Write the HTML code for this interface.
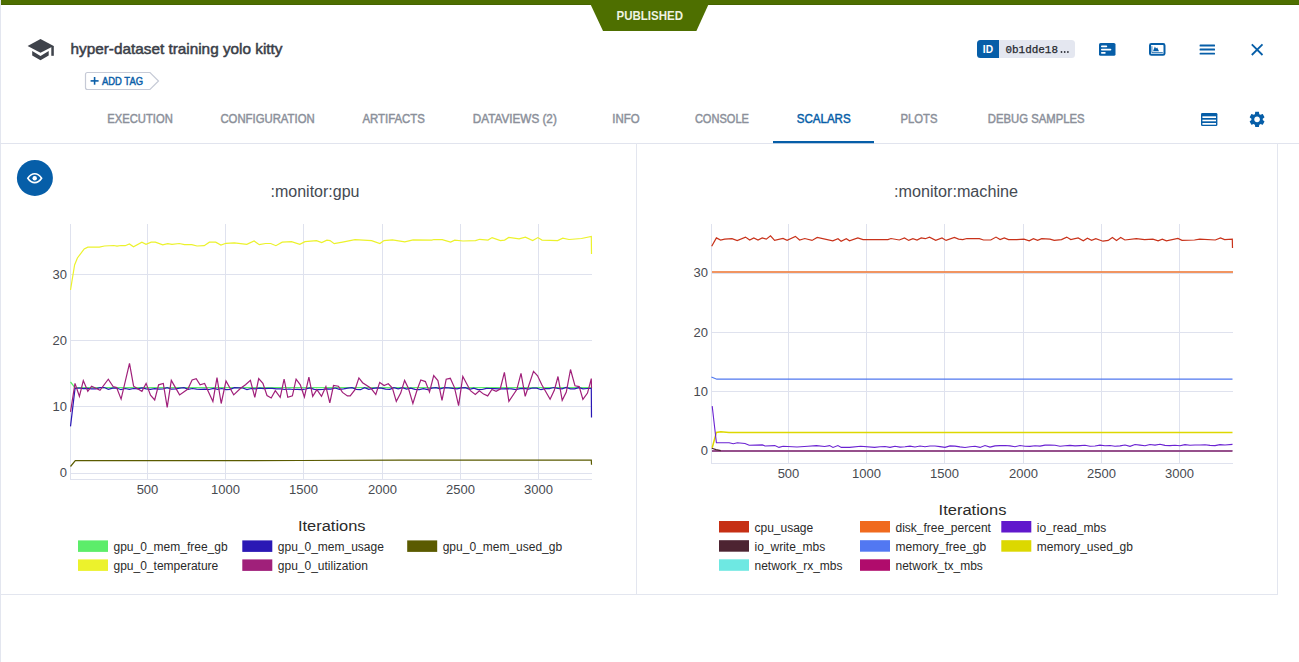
<!DOCTYPE html>
<html><head><meta charset="utf-8">
<style>
html,body{margin:0;padding:0;background:#fff;}
body{width:1299px;height:662px;position:relative;overflow:hidden;font-family:"Liberation Sans",sans-serif;}
svg{position:absolute;left:0;top:0;}
text{font-family:"Liberation Sans",sans-serif;}
.tab{font-size:12px;fill:#8b909a;stroke:#8b909a;stroke-width:0.45px;}
.tk{font-size:13px;fill:#474a50;}
.lg{font-size:12px;fill:#2a2a2a;}
.ttl{font-size:16px;fill:#454a52;}
.it{font-size:14px;fill:#2a2a2a;}
</style></head>
<body>
<svg width="1299" height="662" viewBox="0 0 1299 662">
<!-- page borders -->
<rect x="0" y="0" width="1" height="662" fill="#e3e6ef"/>
<rect x="0" y="143" width="1299" height="1" fill="#e1e4ee"/>
<rect x="636" y="143" width="1" height="452" fill="#e3e6ef"/>
<rect x="1277" y="143" width="1" height="452" fill="#e3e6ef"/>
<rect x="0" y="594" width="1278" height="1" fill="#e3e6ef"/>
<!-- top status bar -->
<rect x="1" y="0" width="1298" height="5" fill="#4e6f00"/><rect x="1" y="4" width="1298" height="1" fill="#466400"/>
<polygon points="588.5,0 710.5,0 696.4,31 603,31" fill="#4e6f00"/>
<text x="616.5" y="20" font-size="12.5" font-weight="bold" fill="#eef3e2" textLength="66.5" lengthAdjust="spacingAndGlyphs">PUBLISHED</text>
<!-- grad cap icon -->
<polygon points="27.6,46 40.5,39 53.7,46 40.5,52.8" fill="#3f434b"/>
<rect x="51.3" y="46" width="2.5" height="9.8" fill="#3f434b"/>
<polygon points="32.2,51 40.5,56 48.7,51 48.7,55.5 40.5,60.3 32.2,55.5" fill="#3f434b"/>
<!-- title -->
<text x="70.5" y="53.8" font-size="15" fill="#3a3e48" stroke="#3a3e48" stroke-width="0.5" textLength="212" lengthAdjust="spacingAndGlyphs">hyper-dataset training yolo kitty</text>
<!-- add tag -->
<path d="M87.5,72.5 H150 L158.5,81 L150,89.5 H87.5 Q85.5,89.5 85.5,87.5 V74.5 Q85.5,72.5 87.5,72.5 Z" fill="#fff" stroke="#c6cad6" stroke-width="1.2"/>
<rect x="90.6" y="80.1" width="8" height="1.6" fill="#0b5fa9"/>
<rect x="93.8" y="77" width="1.6" height="7.7" fill="#0b5fa9"/>
<text x="102" y="84.6" font-size="10.5" fill="#0b5fa9" stroke="#0b5fa9" stroke-width="0.45" textLength="41" lengthAdjust="spacingAndGlyphs">ADD TAG</text>
<!-- ID badge -->
<rect x="977" y="40" width="98" height="18" rx="3.5" fill="#e4e7f0"/>
<path d="M980.5,40 H999 V58 H980.5 Q977,58 977,54.5 V43.5 Q977,40 980.5,40 Z" fill="#065ea8"/>
<text x="982.8" y="53" font-size="11" font-weight="bold" fill="#fff" textLength="10.2" lengthAdjust="spacingAndGlyphs">ID</text>
<text x="1005.5" y="53" font-family="Liberation Mono" font-size="11" fill="#25272d" stroke="#25272d" stroke-width="0.25" textLength="52.5" lengthAdjust="spacingAndGlyphs" style="font-family:'Liberation Mono',monospace">0b1dde18</text>
<circle cx="1061.5" cy="52" r="0.9" fill="#2f3138"/><circle cx="1064.7" cy="52" r="0.9" fill="#2f3138"/><circle cx="1067.9" cy="52" r="0.9" fill="#2f3138"/>
<!-- details icon -->
<rect x="1099" y="43" width="16.5" height="12.8" rx="1.6" fill="#065ea8"/>
<rect x="1101" y="45.5" width="6.2" height="1.7" rx="0.8" fill="#fff"/>
<rect x="1101" y="48.8" width="10.3" height="1.8" rx="0.8" fill="#fff"/>
<rect x="1101" y="52" width="4.7" height="1.8" rx="0.8" fill="#fff"/>
<!-- chart icon -->
<rect x="1150" y="44" width="14.5" height="10.8" rx="1.4" fill="none" stroke="#065ea8" stroke-width="2"/>
<path d="M1151.9,46.2 V52.6 H1162.8" fill="none" stroke="#065ea8" stroke-width="0.8"/>
<path d="M1153,51.2 L1154.9,46.5 L1156,48.5 L1157.2,47.5 L1159,51.2 Z" fill="#065ea8"/>
<!-- hamburger -->
<rect x="1199.6" y="44.6" width="15.4" height="1.8" rx="0.5" fill="#065ea8"/>
<rect x="1199.6" y="48.6" width="15.4" height="1.8" rx="0.5" fill="#065ea8"/>
<rect x="1199.6" y="52.7" width="15.4" height="1.8" rx="0.5" fill="#065ea8"/>
<!-- close -->
<path d="M1251.8,44.3 L1262.5,55 M1262.5,44.3 L1251.8,55" stroke="#065ea8" stroke-width="1.8"/>
<!-- tabs -->
<text class="tab" x="107.3" y="123" textLength="65.5" lengthAdjust="spacingAndGlyphs">EXECUTION</text>
<text class="tab" x="220.4" y="123" textLength="94.3" lengthAdjust="spacingAndGlyphs">CONFIGURATION</text>
<text class="tab" x="362.4" y="123" textLength="62.5" lengthAdjust="spacingAndGlyphs">ARTIFACTS</text>
<text class="tab" x="472.8" y="123" textLength="84" lengthAdjust="spacingAndGlyphs">DATAVIEWS (2)</text>
<text class="tab" x="612.3" y="123" textLength="27.3" lengthAdjust="spacingAndGlyphs">INFO</text>
<text class="tab" x="694.9" y="123" textLength="54" lengthAdjust="spacingAndGlyphs">CONSOLE</text>
<text class="tab" x="796.7" y="123" textLength="54" lengthAdjust="spacingAndGlyphs" style="fill:#065ea8;stroke:#065ea8">SCALARS</text>
<text class="tab" x="900.5" y="123" textLength="37" lengthAdjust="spacingAndGlyphs">PLOTS</text>
<text class="tab" x="987.8" y="123" textLength="96.8" lengthAdjust="spacingAndGlyphs">DEBUG SAMPLES</text>
<rect x="773" y="141" width="101" height="2.2" fill="#065ea8"/>
<!-- list icon -->
<rect x="1201" y="113" width="16.4" height="13" rx="1.3" fill="#065ea8"/>
<rect x="1202.4" y="116.3" width="13.6" height="1.7" fill="#fff"/>
<rect x="1202.4" y="119.7" width="13.6" height="1.6" fill="#fff"/>
<rect x="1202.4" y="123" width="13.6" height="1.7" fill="#fff"/>
<!-- gear -->
<g transform="translate(1247.6,109.9) scale(0.79)">
<path fill="#065ea8" fill-rule="evenodd" d="M19.14,12.94c0.04-0.3,0.06-0.61,0.06-0.94c0-0.32-0.02-0.64-0.07-0.94l2.03-1.58c0.18-0.14,0.23-0.41,0.12-0.61 l-1.92-3.32c-0.12-0.22-0.37-0.29-0.59-0.22l-2.39,0.96c-0.5-0.38-1.03-0.7-1.62-0.94L14.4,2.81c-0.04-0.24-0.24-0.41-0.48-0.41 h-3.84c-0.24,0-0.43,0.17-0.47,0.41L9.25,5.35C8.66,5.59,8.120,5.92,7.63,6.29L5.24,5.33c-0.22-0.08-0.47,0-0.59,0.22L2.74,8.87 C2.62,9.08,2.66,9.34,2.86,9.48l2.03,1.58C4.84,11.36,4.8,11.690,4.8,12s0.02,0.64,0.07,0.94l-2.03,1.58 c-0.18,0.14-0.23,0.41-0.12,0.61l1.92,3.32c0.12,0.22,0.37,0.29,0.59,0.22l2.39-0.96c0.5,0.38,1.03,0.7,1.62,0.94l0.36,2.54 c0.05,0.24,0.24,0.41,0.48,0.41h3.84c0.24,0,0.44-0.17,0.47-0.41l0.36-2.54c0.59-0.24,1.13-0.56,1.62-0.94l2.39,0.96 c0.22,0.08,0.47,0,0.59-0.22l1.92-3.32c0.12-0.22,0.07-0.47-0.12-0.61L19.14,12.94z M12,15.6c-1.98,0-3.6-1.62-3.6-3.6 s1.62-3.6,3.6-3.6s3.6,1.62,3.6,3.6S13.980,15.6,12,15.6z"/>
</g>
<!-- eye button -->
<circle cx="34.9" cy="177.9" r="18" fill="#065ea8"/>
<path d="M27.8,178.2 C30.2,174.6 32.5,173.8 34.7,173.8 C36.9,173.8 39.2,174.6 41.6,178.2 C39.2,181.8 36.9,182.6 34.7,182.6 C32.5,182.6 30.2,181.8 27.8,178.2 Z" fill="none" stroke="#fff" stroke-width="1.6"/>
<circle cx="34.7" cy="178.2" r="2.2" fill="#fff"/>
<!-- chart titles -->
<text class="ttl" x="270.5" y="196.5" textLength="89" lengthAdjust="spacingAndGlyphs">:monitor:gpu</text>
<text class="ttl" x="894" y="196.5" textLength="124" lengthAdjust="spacingAndGlyphs">:monitor:machine</text>
<!-- left chart -->
<rect x="147" y="224" width="1" height="255" fill="#dfe2ee"/>
<rect x="225" y="224" width="1" height="255" fill="#dfe2ee"/>
<rect x="303" y="224" width="1" height="255" fill="#dfe2ee"/>
<rect x="382" y="224" width="1" height="255" fill="#dfe2ee"/>
<rect x="460" y="224" width="1" height="255" fill="#dfe2ee"/>
<rect x="538" y="224" width="1" height="255" fill="#dfe2ee"/>
<rect x="70" y="473" width="522" height="1" fill="#dfe2ee"/>
<rect x="70" y="406" width="522" height="1" fill="#dfe2ee"/>
<rect x="70" y="340" width="522" height="1" fill="#dfe2ee"/>
<rect x="70" y="274" width="522" height="1" fill="#dfe2ee"/>
<rect x="70" y="224" width="1" height="256" fill="#dfe2ee"/>
<rect x="70" y="479" width="522" height="1" fill="#dfe2ee"/>
<polyline points="70.5,382.0 75.0,387.6 591.5,387.6" fill="none" stroke="#5ced6a" stroke-width="1.2"/>
<polyline points="70.5,426.4 75.0,388.6 79.0,388.0 83.2,388.7 87.4,388.3 91.6,388.8 95.8,388.9 100.0,387.6 104.2,387.5 108.4,389.3 112.6,388.1 116.8,388.0 121.0,389.7 125.2,388.5 129.4,389.3 133.6,388.5 137.8,388.9 142.0,387.8 146.2,388.9 150.4,389.4 154.6,388.7 158.8,389.1 163.0,389.0 167.2,387.6 171.4,389.2 175.6,388.8 179.8,388.2 184.0,387.6 188.2,389.4 192.4,388.5 196.6,389.1 200.8,389.4 205.0,389.1 209.2,389.5 213.4,388.4 217.6,389.3 221.8,388.5 226.0,389.6 230.2,389.4 234.4,387.7 238.6,387.8 242.8,388.0 247.0,389.6 251.2,388.5 255.4,388.9 259.6,388.2 263.8,388.6 268.0,388.3 272.2,388.3 276.4,388.8 280.6,388.8 284.8,389.5 289.0,389.0 293.2,389.5 297.4,389.4 301.6,389.7 305.8,389.0 310.0,387.9 314.2,389.4 318.4,389.6 322.6,389.5 326.8,388.8 331.0,389.1 335.2,388.0 339.4,389.3 343.6,388.8 347.8,388.1 352.0,387.6 356.2,389.4 360.4,389.7 364.6,387.7 368.8,389.3 373.0,388.4 377.2,387.8 381.4,388.1 385.6,389.2 389.8,389.4 394.0,387.6 398.2,388.9 402.4,387.6 406.6,389.1 410.8,388.2 415.0,389.4 419.2,389.7 423.4,388.6 427.6,389.7 431.8,388.2 436.0,387.7 440.2,388.8 444.4,387.6 448.6,387.9 452.8,388.4 457.0,388.8 461.2,387.8 465.4,387.6 469.6,389.4 473.8,388.2 478.0,389.6 482.2,389.5 486.4,388.3 490.6,388.5 494.8,388.6 499.0,388.9 503.2,388.8 507.4,388.7 511.6,388.9 515.8,389.6 520.0,388.6 524.2,388.4 528.4,389.1 532.6,388.0 536.8,388.2 541.0,389.7 545.2,388.6 549.4,388.7 553.6,387.5 557.8,388.4 562.0,388.8 566.2,387.5 570.4,388.9 574.6,388.9 578.8,387.6 583.0,388.9 587.2,388.5 591.3,388.5 591.5,417.4" fill="none" stroke="#2a18b5" stroke-width="1.2"/>
<polyline points="70.5,466.5 75.3,460.7 300.0,460.5 400.0,460.2 591.3,460.2 591.5,464.7" fill="none" stroke="#5b5b00" stroke-width="1.2"/>
<polyline points="70.5,290.0 74.6,264.9 77.4,258.0 84.2,249.0 87.8,247.2 99.3,247.2 104.5,246.0 113.8,245.5 117.0,246.2 121.0,245.5 125.2,245.7 129.4,243.9 133.5,246.8 141.9,242.2 146.0,244.3 151.2,242.2 155.4,242.2 162.7,244.9 167.8,243.7 172.0,244.3 179.3,243.5 184.5,244.7 191.8,244.7 197.0,246.0 204.2,245.7 209.4,242.2 215.7,242.2 220.9,245.1 226.0,243.3 234.4,242.8 246.8,244.3 254.1,241.0 259.3,244.7 265.5,243.5 270.7,243.5 275.9,245.7 282.2,242.2 291.5,241.6 299.8,244.3 305.0,241.6 316.5,240.6 321.7,242.6 326.9,240.1 330.0,240.6 334.2,243.7 342.5,242.2 355.0,239.7 363.3,240.1 371.6,240.6 379.9,243.5 384.0,240.6 392.4,239.9 404.8,241.8 413.1,239.9 431.8,240.1 433.9,239.5 442.2,239.7 450.6,242.0 454.7,240.1 463.0,241.0 475.5,240.6 479.7,239.3 488.0,240.1 492.1,237.6 500.4,240.6 504.6,240.1 508.8,237.4 519.1,238.9 525.4,237.2 532.7,240.6 537.9,237.6 542.0,240.1 557.6,240.6 562.8,238.1 569.0,239.5 581.5,238.5 591.3,236.4 591.5,254.0" fill="none" stroke="#ecf22c" stroke-width="1.2"/>
<polyline points="70.5,411.8 75.0,383.4 79.4,396.3 83.3,380.6 87.8,391.3 91.6,386.2 100.0,390.3 108.3,379.2 113.1,386.6 116.6,387.6 121.1,399.1 129.5,363.3 133.6,386.2 141.9,391.3 146.1,383.4 150.5,395.2 154.7,400.0 158.6,384.8 163.3,383.4 167.2,407.4 171.3,380.4 179.6,394.9 187.9,389.0 192.1,379.9 196.2,378.6 200.1,384.8 204.6,383.4 212.9,401.4 217.0,377.6 221.2,403.5 226.0,381.0 233.7,394.9 240.6,388.3 245.5,384.8 250.4,380.4 254.8,397.3 258.7,378.6 262.9,383.4 267.0,395.5 271.2,398.0 275.3,390.7 280.2,397.3 284.1,379.2 287.8,397.3 292.4,395.9 296.1,379.2 300.3,384.8 304.4,397.0 308.9,377.2 312.7,396.3 316.9,389.6 321.5,396.3 325.9,386.6 329.8,402.8 333.5,385.5 338.4,386.2 342.5,392.4 347.4,395.9 350.2,395.9 355.0,389.6 358.9,377.9 362.6,382.7 371.0,388.3 375.8,394.5 379.7,382.4 384.1,385.5 388.3,383.8 392.4,388.0 396.3,401.4 400.7,393.1 404.6,380.4 408.4,388.3 412.9,403.5 417.4,389.0 420.8,380.0 425.4,381.6 429.5,392.1 433.7,375.5 437.9,380.6 442.0,400.4 446.2,379.2 450.3,378.3 454.5,387.6 458.6,405.6 462.8,376.5 470.4,390.7 475.3,394.5 479.4,390.7 483.6,394.1 487.7,395.9 491.9,389.4 496.1,391.3 500.2,389.0 504.4,372.3 508.9,401.4 516.8,389.6 521.0,373.3 525.2,396.3 533.5,371.4 537.6,375.8 541.8,384.8 550.1,399.3 554.3,390.3 558.0,376.5 562.2,400.3 566.3,392.1 570.5,369.5 575.0,385.8 579.2,386.6 582.9,399.3 587.5,393.1 591.3,378.6 591.5,388.3" fill="none" stroke="#a0207a" stroke-width="1.2"/>
<text x="67" y="477.1" text-anchor="end" class="tk">0</text>
<text x="67" y="411.1" text-anchor="end" class="tk">10</text>
<text x="67" y="345.1" text-anchor="end" class="tk">20</text>
<text x="67" y="279.1" text-anchor="end" class="tk">30</text>
<text x="147.5" y="494" text-anchor="middle" class="tk">500</text>
<text x="225.5" y="494" text-anchor="middle" class="tk">1000</text>
<text x="303.5" y="494" text-anchor="middle" class="tk">1500</text>
<text x="382.5" y="494" text-anchor="middle" class="tk">2000</text>
<text x="460.5" y="494" text-anchor="middle" class="tk">2500</text>
<text x="538.5" y="494" text-anchor="middle" class="tk">3000</text>
<!-- right chart -->
<rect x="788" y="224" width="1" height="239" fill="#dfe2ee"/>
<rect x="866" y="224" width="1" height="239" fill="#dfe2ee"/>
<rect x="944" y="224" width="1" height="239" fill="#dfe2ee"/>
<rect x="1023" y="224" width="1" height="239" fill="#dfe2ee"/>
<rect x="1101" y="224" width="1" height="239" fill="#dfe2ee"/>
<rect x="1179" y="224" width="1" height="239" fill="#dfe2ee"/>
<rect x="711" y="450" width="522" height="1" fill="#dfe2ee"/>
<rect x="711" y="391" width="522" height="1" fill="#dfe2ee"/>
<rect x="711" y="332" width="522" height="1" fill="#dfe2ee"/>
<rect x="711" y="273" width="522" height="1" fill="#dfe2ee"/>
<rect x="711" y="224" width="1" height="240" fill="#dfe2ee"/>
<rect x="711" y="463" width="522" height="1" fill="#dfe2ee"/>
<rect x="712" y="271.1" width="521" height="1.8" fill="#f08a50"/>
<polyline points="711.7,246.2 716.4,237.9 720.6,240.0 724.7,239.1 732.0,238.7 737.2,240.6 745.5,237.1 749.7,240.0 753.8,237.9 758.0,240.0 762.2,237.9 766.3,239.1 770.5,235.8 774.6,240.4 783.0,238.5 787.1,240.4 795.4,236.4 799.6,240.0 804.8,238.5 812.0,240.4 817.2,237.5 832.8,240.8 838.0,238.7 841.1,241.2 846.3,238.7 849.5,240.8 857.8,237.9 863.0,239.6 887.9,239.6 891.0,238.5 899.3,240.0 904.5,237.9 908.7,240.4 912.9,238.7 917.0,240.0 921.2,237.9 925.3,238.7 929.5,237.1 935.7,240.4 942.0,237.9 946.1,240.4 954.4,237.5 958.6,239.1 962.7,239.6 966.9,238.5 979.4,238.7 983.5,240.0 990.8,240.0 996.0,237.1 1000.1,239.6 1004.3,237.9 1008.5,239.6 1016.8,239.6 1024.0,239.1 1029.2,240.8 1033.4,238.7 1037.6,240.4 1041.7,238.7 1050.0,239.1 1054.2,240.4 1061.5,239.6 1066.7,237.1 1070.8,239.6 1078.1,237.9 1083.3,240.8 1087.4,238.3 1091.6,240.4 1095.8,238.7 1103.0,241.2 1108.2,240.4 1112.4,237.5 1116.5,240.4 1120.7,237.5 1124.9,240.0 1136.3,238.7 1144.6,239.6 1152.9,239.1 1158.1,240.8 1162.3,239.1 1166.4,240.8 1177.9,238.5 1182.0,240.4 1194.5,240.0 1199.7,239.1 1215.3,240.0 1220.5,237.9 1224.6,239.6 1232.3,239.1 1232.5,247.9" fill="none" stroke="#c8321a" stroke-width="1.2"/>
<polyline points="711.4,377.0 716.8,379.2 1232.5,379.2" fill="none" stroke="#5078f0" stroke-width="1.2"/>
<polyline points="712.2,447.7 716.4,432.4 720.8,431.7 729.0,432.4 1232.5,432.4" fill="none" stroke="#ddd800" stroke-width="1.5"/>
<polyline points="712.2,406.1 716.4,442.8 729.1,442.8 733.3,443.8 737.4,442.8 745.0,443.5 749.2,445.2 762.4,444.9 765.1,446.0 774.8,445.6 779.0,447.4 783.1,446.3 797.0,447.0 808.0,446.3 816.4,445.6 824.7,446.5 829.6,445.6 833.0,447.4 837.9,445.6 841.3,447.4 849.6,447.4 860.7,446.3 874.6,447.4 880.0,446.8 885.0,446.5 890.0,447.4 895.0,446.2 900.0,447.1 905.0,446.7 910.0,446.1 915.0,447.0 920.0,446.0 925.0,446.7 930.0,446.0 935.0,446.0 940.0,446.6 945.0,447.4 950.0,445.9 955.0,446.1 960.0,446.9 965.0,447.5 970.0,446.7 975.0,446.3 980.0,447.4 985.0,445.5 990.0,447.1 995.0,445.9 1000.0,445.6 1005.0,445.5 1010.0,445.9 1015.0,446.8 1020.0,445.5 1025.0,446.3 1030.0,446.4 1035.0,445.8 1040.0,446.1 1045.0,445.1 1050.0,445.1 1055.0,445.3 1060.0,446.2 1065.0,445.7 1070.0,445.4 1075.0,445.9 1080.0,445.6 1085.0,445.3 1090.0,446.2 1095.0,446.0 1100.0,445.1 1105.0,445.7 1110.0,445.5 1115.0,446.2 1120.0,445.9 1125.0,445.0 1130.0,446.3 1135.0,444.5 1140.0,445.1 1145.0,445.7 1150.0,444.5 1155.0,445.1 1160.0,444.2 1165.0,445.4 1170.0,445.6 1175.0,445.2 1180.0,445.7 1185.0,444.6 1190.0,445.3 1195.0,445.0 1200.0,445.0 1205.0,444.7 1210.0,445.4 1215.0,445.6 1220.0,444.6 1225.0,445.0 1232.5,444.4" fill="none" stroke="#6a22d2" stroke-width="1.1"/>
<polyline points="712.0,451.0 1232.5,451.0" fill="none" stroke="#96508c" stroke-width="2"/>
<polyline points="711.8,448.2 716,449.6 720.8,450.6" fill="none" stroke="#4d2432" stroke-width="1.2"/>
<text x="708" y="455.1" text-anchor="end" class="tk">0</text>
<text x="708" y="396.1" text-anchor="end" class="tk">10</text>
<text x="708" y="336.6" text-anchor="end" class="tk">20</text>
<text x="708" y="277.1" text-anchor="end" class="tk">30</text>
<text x="788.5" y="478" text-anchor="middle" class="tk">500</text>
<text x="866.5" y="478" text-anchor="middle" class="tk">1000</text>
<text x="944.5" y="478" text-anchor="middle" class="tk">1500</text>
<text x="1023.5" y="478" text-anchor="middle" class="tk">2000</text>
<text x="1101.5" y="478" text-anchor="middle" class="tk">2500</text>
<text x="1179.5" y="478" text-anchor="middle" class="tk">3000</text>
<text class="it" x="298" y="531" textLength="67.5" lengthAdjust="spacingAndGlyphs">Iterations</text>
<text class="it" x="938.6" y="515" textLength="67.8" lengthAdjust="spacingAndGlyphs">Iterations</text>
<rect x="78" y="540.4" width="30" height="11.5" fill="#5ced6a"/>
<text x="113.5" y="551.1" class="lg">gpu_0_mem_free_gb</text>
<rect x="242.3" y="540.4" width="30" height="11.5" fill="#2a18b5"/>
<text x="277.8" y="551.1" class="lg">gpu_0_mem_usage</text>
<rect x="407.2" y="540.4" width="30" height="11.5" fill="#5b5b00"/>
<text x="442.7" y="551.1" class="lg">gpu_0_mem_used_gb</text>
<rect x="78" y="559.4" width="30" height="11.5" fill="#ecf22c"/>
<text x="113.5" y="570.1" class="lg">gpu_0_temperature</text>
<rect x="242.3" y="559.4" width="30" height="11.5" fill="#a0207a"/>
<text x="277.8" y="570.1" class="lg">gpu_0_utilization</text>
<rect x="719" y="521" width="30" height="11.5" fill="#c62f14"/>
<text x="754.5" y="531.7" class="lg">cpu_usage</text>
<rect x="860" y="521" width="30" height="11.5" fill="#f06a1e"/>
<text x="895.5" y="531.7" class="lg">disk_free_percent</text>
<rect x="1001.3" y="521" width="30" height="11.5" fill="#6018cc"/>
<text x="1036.8" y="531.7" class="lg">io_read_mbs</text>
<rect x="719" y="540.2" width="30" height="11.5" fill="#4d2432"/>
<text x="754.5" y="550.9" class="lg">io_write_mbs</text>
<rect x="860" y="540.2" width="30" height="11.5" fill="#5278f2"/>
<text x="895.5" y="550.9" class="lg">memory_free_gb</text>
<rect x="1001.3" y="540.2" width="30" height="11.5" fill="#dcd800"/>
<text x="1036.8" y="550.9" class="lg">memory_used_gb</text>
<rect x="719" y="559.3" width="30" height="11.5" fill="#6ee8e2"/>
<text x="754.5" y="570.0" class="lg">network_rx_mbs</text>
<rect x="860" y="559.3" width="30" height="11.5" fill="#b00c6c"/>
<text x="895.5" y="570.0" class="lg">network_tx_mbs</text>
</svg>
</body></html>
